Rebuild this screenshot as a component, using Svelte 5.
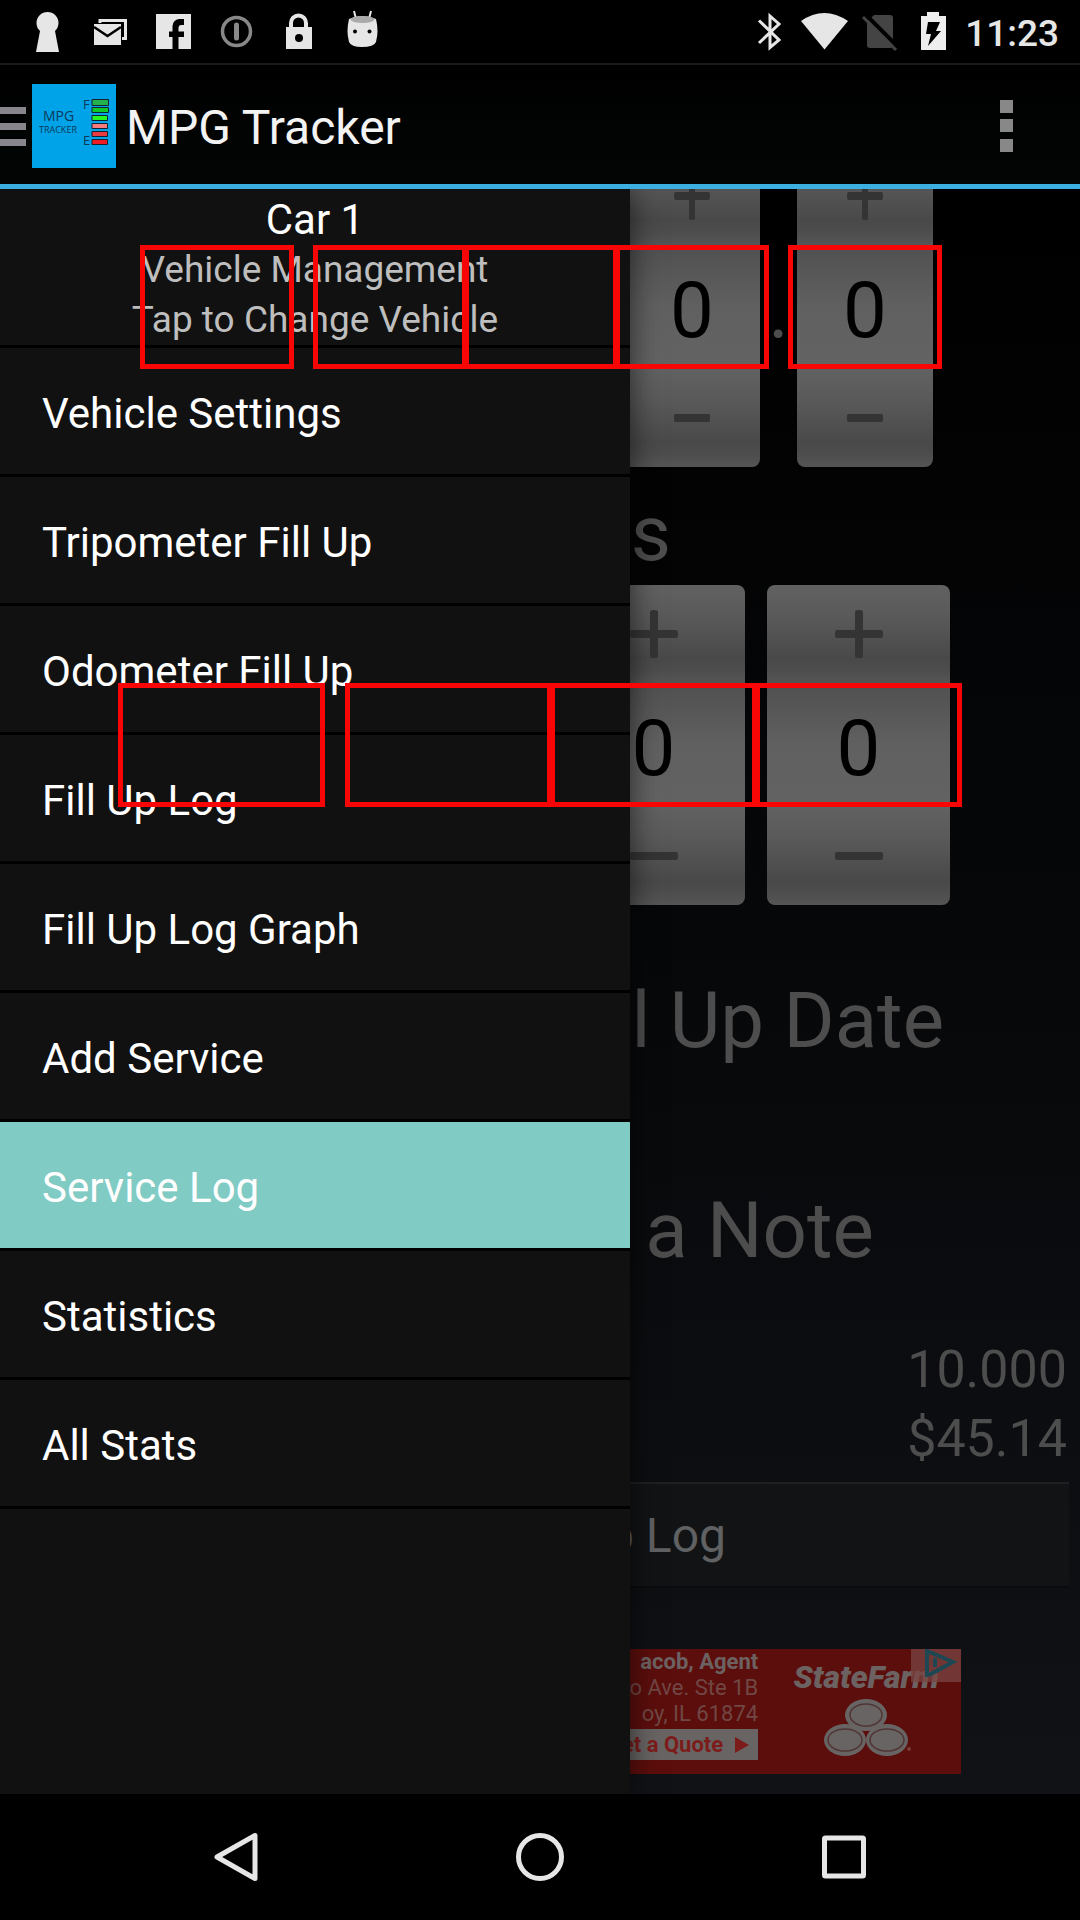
<script>
  const items = [
    'Vehicle Settings',
    'Tripometer Fill Up',
    'Odometer Fill Up',
    'Fill Up Log',
    'Fill Up Log Graph',
    'Add Service',
    'Service Log',
    'Statistics',
    'All Stats'
  ];
  const selected = 'Service Log';
  const rows = [
    { kind: 'narrow', lead: 1, dot: 3, values: ['', '', '', '0', '0'] },
    { kind: 'wide', lead: 1, dot: -1, values: ['', '', '0', '0'] }
  ];
</script>

<div class="screen">
  <header class="status">
    <div class="icons">
      <svg class="note" viewBox="0 0 63 63" aria-hidden="true"><path fill="#e6e6e6" d="M20 52l4-21a11 11 0 1 1 15 0l4 21z" /></svg>
      <svg class="note" viewBox="0 0 63 63" aria-hidden="true">
        <path fill="none" stroke="#e6e6e6" stroke-width="3" d="M21 23V20.500H46.500V38.500H43" />
        <path fill="#e6e6e6" d="M15 24h27v21H15z" /><path fill="none" stroke="#000" stroke-width="2.500" d="M15 27l13.500 9L42 27" />
      </svg>
      <svg class="note" viewBox="0 0 63 63" aria-hidden="true"><path fill="#e6e6e6" d="M14 14h35v35H36.500V37H42v-5.500H36.500V28q0-3 3-3H42v-6h-5q-6 1-6.500 7v5.500H27V37h3.500v12H14z" /></svg>
      <svg class="note" viewBox="0 0 63 63" aria-hidden="true"><circle cx="31.500" cy="31.500" r="14" fill="none" stroke="#888" stroke-width="3.500" /><path stroke="#888" stroke-width="5" stroke-linecap="round" d="M31.500 25v13" /></svg>
      <svg class="note" viewBox="0 0 63 63" aria-hidden="true"><path fill="none" stroke="#e6e6e6" stroke-width="4" d="M23 29v-6a7.500 7.500 0 0 1 15 0v6" /><path fill="#e6e6e6" d="M18 27h26v22H18z" /><circle cx="31" cy="38" r="4" fill="#000" /></svg>
      <svg class="note" viewBox="0 0 63 63" aria-hidden="true"><path stroke="#e6e6e6" stroke-width="2" d="M23 11l2 8M40 11l-2 8" /><path fill="#e6e6e6" d="M18 19Q31 13 45 19Q48 31 45 42Q43 47 31 47Q20 47 18 42Q15 31 18 19z" /><ellipse cx="31.500" cy="19.500" rx="12" ry="3.500" fill="#aaa" /><circle cx="24" cy="31.500" r="2" /><circle cx="38.500" cy="31.500" r="2" /></svg>
    </div>
    <div class="icons">
      <svg class="sys" viewBox="0 0 55 63" aria-hidden="true"><path fill="none" stroke="#e6e6e6" stroke-width="3" d="M17 20.500L37 40 28 47.500V16L37 24 17 43" /></svg>
      <svg class="sys" viewBox="0 0 55 63" aria-hidden="true"><path fill="#e6e6e6" d="M4 21Q27 5 51 21L27.500 49.500z" /></svg>
      <svg class="sys" viewBox="0 0 55 63" aria-hidden="true"><path fill="#444" d="M15 22l7-7h16q3 0 3 3v27q0 3-3 3H18q-3 0-3-3z" /><path stroke="#000" stroke-width="4" d="M14 15l32 32" /><path stroke="#444" stroke-width="3" d="M11 17l33 33" /></svg>
      <svg class="sys" viewBox="0 0 55 63" aria-hidden="true"><path fill="#eee" d="M14 16h6v-4h12v4h7v34H14z" /><path d="M21 22h12l-4 9h5L21 46l3-12h-5z" /></svg>
      <time>11:23</time>
    </div>
  </header>

  <div class="actionbar">
    <button class="home" aria-label="Close navigation drawer">
      <svg class="burger" viewBox="0 0 26 42" aria-hidden="true"><path fill="#88868c" d="M0 2h26v7H0zM0 18h26v7H0zM0 34h26v7H0z" /></svg>
      <svg class="appicon" viewBox="0 0 84 84" aria-hidden="true">
        <path fill="#00a2e8" d="M0 0h84v84H0z" />
        <text x="11" y="37" font-size="14">MPG</text>
        <text x="7" y="49" font-size="9">TRACKER</text>
        <text x="51" y="25" font-size="13">F</text>
        <text x="51" y="61" font-size="13">E</text>
        <g stroke="#123" stroke-width="1">
          <path fill="#22b14c" d="M60 15.500h16.500v6H60z" /><path fill="#0ec82a" d="M60 23.500h16.500v5H60z" /><path fill="#22f522" d="M60 31.500h15.500v5H60z" />
          <path fill="#f77b7f" d="M60 39.500h15.500v5H60z" /><path fill="#e83c40" d="M60 47.500h15.500v5H60z" /><path fill="#ed1c24" d="M60 55.500h15.500v5H60z" />
        </g>
      </svg>
    </button>
    <h1>MPG Tracker</h1>
    <button class="more" aria-label="More options">
      <svg viewBox="0 0 14 52" aria-hidden="true"><path fill="#888" d="M0 0h13v13H0zM0 19h13v13H0zM0 39h13v13H0z" /></svg>
    </button>
  </div>

  <div class="stage">
    <main>
      {#each rows as row, r}
        <div class="pickers {row.kind}">
          {#each row.values as value, i}
            <div class="picker">
              <button aria-label="Increase"><svg viewBox="0 0 48 48" preserveAspectRatio="none" aria-hidden="true"><path d="M20 2q0-2 4-2t4 2v18h18q2 0 2 4t-2 4H28v18q0 2-4 2t-4-2V28H2q-2 0-2-4t2-4h18z" /></svg></button>
              <div class="value"><input aria-label="Digit {i + 1} of row {r + 1}" inputmode="numeric" {value} /></div>
              <button aria-label="Decrease"><svg viewBox="0 0 48 48" preserveAspectRatio="none" aria-hidden="true"><rect y="20" width="48" height="8" rx="2" /></svg></button>
            </div>
            {#if i === row.dot}
              <span class="sep">.</span>
            {:else if i + 1 === row.lead}
              <span class="sep"></span>
            {/if}
          {/each}
        </div>
        {#if r === 0}
          <h2 class="unit">s</h2>
        {/if}
      {/each}

      <button class="big date">l Up Date</button>
      <button class="big memo">a Note</button>
      <p class="totals">10.000<br />$45.14</p>
      <button class="log">p Log</button>

      <a class="ad" href="#ad">
        <span class="copy">
          <b>acob, Agent</b>
          <span>o Ave. Ste 1B</span>
          <span>oy, IL 61874</span>
          <span class="quote">et a Quote <svg viewBox="0 0 14 16" aria-hidden="true"><path fill="#7c1c1a" d="M0 0l14 8-14 8z" /></svg></span>
        </span>
        <span class="brand">
          <strong>StateFarm</strong>
          <svg viewBox="0 0 90 58" aria-hidden="true">
            <g fill="#686464"><ellipse cx="45" cy="16" rx="21" ry="16" /><ellipse cx="24" cy="41" rx="21" ry="16" /><ellipse cx="66" cy="41" rx="21" ry="16" /></g>
            <g fill="none" stroke="#513535" stroke-width="1.500"><ellipse cx="45" cy="16" rx="16" ry="11" /><ellipse cx="24" cy="41" rx="17" ry="11" /><ellipse cx="66" cy="41" rx="17" ry="11" /></g>
            <circle cx="88" cy="50" r="2" fill="#7b3a38" />
          </svg>
        </span>
        <svg class="choices" viewBox="0 0 50 33" aria-hidden="true"><path fill="#7a4442" fill-opacity=".75" d="M0 0h50v33H0z" /><path fill="none" stroke="#1d4853" stroke-width="4" d="M16 28V2l26 11-24 13M24 9v9" /></svg>
      </a>
    </main>

    <nav class="drawer" aria-label="Main">
      <button class="vehicle"><span class="car">Car 1</span><span>Vehicle Management</span><span>Tap to Change Vehicle</span></button>
      <ul>
        {#each items as item}
          <li><a href="#{item}" class:selected={item === selected}>{item}</a></li>
        {/each}
      </ul>
    </nav>
  </div>

  <footer class="sysnav">
    <button aria-label="Back"><svg viewBox="0 0 50 50"><path d="M44 3.500V46.500L6 25z" /></svg></button>
    <button aria-label="Home"><svg viewBox="0 0 50 50"><circle cx="25" cy="25" r="21.500" /></svg></button>
    <button aria-label="Recent apps"><svg viewBox="0 0 50 50"><rect x="5.500" y="6" width="39" height="38" rx="1" /></svg></button>
  </footer>
</div>

<style>
  :global(body) { margin: 0; background: #000; }
  .screen { display: flex; flex-direction: column; min-height: 100vh; background: #000; color: #fff; font-family: Roboto, "Liberation Sans", sans-serif; }
  button { border: 0; padding: 0; margin: 0; background: none; color: inherit; font: inherit; }
  a { color: inherit; text-decoration: none; }
  svg { display: block; flex: none; }
  h1, h2, p, ul { margin: 0; padding: 0; font-weight: 400; list-style: none; }

  .status { display: flex; justify-content: space-between; padding: 0 21px 0 16px; border-bottom: 2px solid #1a1a1a; }
  .icons { display: flex; align-items: center; }
  .note { width: 63px; height: 63px; }
  .sys { width: 55px; height: 63px; }
  time { padding: 4px 0 0 3px; font-size: 37px; font-weight: 500; color: #e6e6e6; }

  .actionbar { display: flex; align-items: center; box-sizing: border-box; height: 124px; padding: 2px 66px 0 0; border-bottom: 5px solid #3aafe0; background: linear-gradient(#000, #030505); }
  .home { display: flex; align-items: center; gap: 6px; }
  .burger { width: 26px; height: 42px; }
  .appicon { width: 84px; height: 84px; }
  .appicon text { font-family: "Open Sans", sans-serif; fill: #0c3a58; }
  h1 { flex: 1; padding: 4px 0 0 10px; font-size: 48px; color: #f3f3f3; }
  .more svg { width: 14px; height: 52px; }

  .stage { display: grid; flex: 1; overflow: hidden; isolation: isolate; background: linear-gradient(#000, #07080a 50%, #101216); }
  main, .drawer { grid-area: 1 / 1; }
  .drawer { z-index: 1; width: calc(100% * 7 / 12); background: #111; box-shadow: 0 0 28px rgb(0 0 0 / .6); }
  main { color: #4d4d4d; }

  .pickers { display: flex; justify-content: center; align-items: center; }
  .narrow { --w: 136px; --glyph: 36px; --reach: -9px; gap: 15px; margin-top: -42px; padding-left: 2px; }
  .wide { --w: 183px; --glyph: 48px; --reach: -12px; gap: 22px; }
  .picker { flex: none; width: var(--w); }
  .picker button { display: grid; place-items: center; width: 100%; height: 98px; background: linear-gradient(#616161, #5a5a5a 30%, #494949 75%, #4c4c4c 85%, #555); }
  .picker button:first-child { border-radius: 8px 8px 0 0; }
  .picker button:last-child { border-radius: 0 0 8px 8px; }
  .picker svg { width: var(--glyph); height: 48px; fill: #343434; }
  .value { position: relative; height: 124px; background: linear-gradient(#505050, #606060 50%, #636363); }
  .value::after { content: ""; position: absolute; inset: 0 var(--reach); z-index: 2; border: 5px solid #f80606; pointer-events: none; }
  input { box-sizing: border-box; width: 100%; height: 100%; padding: 7px 0 0; border: 0; background: none; color: #000; font: 78px Roboto, sans-serif; text-align: center; }
  .sep { margin: 0 -15px; width: 37px; padding-top: 8px; font-size: 78px; text-align: center; }
  .wide .sep { margin: 0 -11px; width: 22px; }

  .unit { padding: 16px 409px 0 0; font-size: 78px; line-height: 102px; text-align: right; }
  .big { display: block; width: 100%; height: 210px; font-size: 78px; text-align: right; }
  .date { margin-top: 10px; padding-right: 136px; }
  .memo { padding-right: 206px; }
  .totals { padding-right: 13px; font-size: 52px; line-height: 69px; text-align: right; }
  .log { display: block; box-sizing: border-box; width: calc(100% - 22px); height: 106px; margin: 9px 11px 61px; padding-right: 343px; border-top: 2px solid #1e2022; border-bottom: 2px solid #0a0b0d; background: #121315; color: #606163; font-size: 48px; text-align: right; }

  .ad { position: relative; display: flex; justify-content: flex-end; width: 78%; height: 125px; margin: 0 auto 20px; background: #5c0e0c; color: #6c6262; }
  .copy { display: flex; flex-direction: column; align-items: flex-end; font-size: 22px; line-height: 26px; }
  .copy > span { color: #704744; }
  .copy .quote { display: flex; align-items: center; gap: 12px; margin-top: 2px; padding: 0 9px 0 60px; line-height: 31px; background: #686464; color: #7c1c1a; font-weight: 700; }
  .quote svg { width: 14px; height: 16px; }
  .brand { display: flex; flex-direction: column; align-items: center; gap: 4px; width: 190px; padding: 10px 0 0 13px; }
  .brand strong { font-size: 32px; line-height: 36px; font-style: italic; font-weight: 900; }
  .brand svg { width: 90px; height: 58px; }
  .choices { position: absolute; top: 0; right: 0; width: 50px; height: 33px; }

  .vehicle { display: grid; box-sizing: border-box; width: 100%; padding-top: 6px; font-size: 37px; line-height: 50px; text-align: center; color: #bebebe; border-bottom: 3px solid #000; }
  .car { font-size: 42px; color: #fff; }
  li { border-bottom: 3px solid #000; }
  li a { display: block; padding: 6px 42px 0; font-size: 42px; line-height: 120px; }
  li a.selected { background: #80cbc4; }

  .sysnav { display: flex; justify-content: center; height: 126px; background: #000; }
  .sysnav button { display: grid; place-items: center; width: 304px; }
  .sysnav svg { width: 50px; height: 50px; fill: none; stroke: #e6e6e6; stroke-width: 5px; stroke-linejoin: round; }
</style>
